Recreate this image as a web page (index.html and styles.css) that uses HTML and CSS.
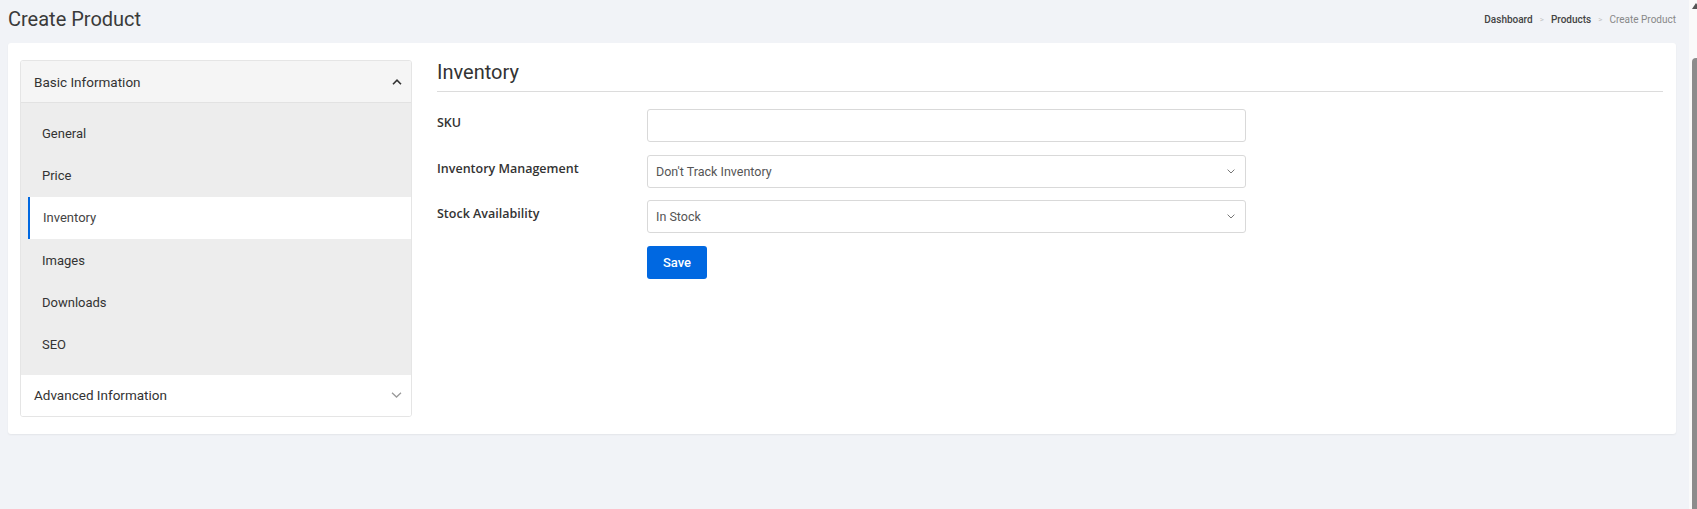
FILE: index.html
```html
<!DOCTYPE html>
<html lang="en">
<head>
<meta charset="utf-8">
<title>Create Product</title>
<link rel="stylesheet" href="styles.css">
</head>
<body>
<div class="page">
  <header class="page-header">
    <h1 class="page-title">Create Product</h1>
    <nav class="breadcrumb">
      <span class="crumb">Dashboard</span><span class="sep">&gt;</span><span class="crumb">Products</span><span class="sep">&gt;</span><span class="crumb current">Create Product</span>
    </nav>
  </header>

  <section class="card">
    <aside class="accordion">
      <div class="acc-header open">
        <span>Basic Information</span>
        <svg class="chev" width="10" height="6" viewBox="0 0 10 6"><path d="M1 5.2 L5 1.2 L9 5.2" fill="none" stroke="#333" stroke-width="1.6"/></svg>
      </div>
      <ul class="acc-list">
        <li class="acc-item">General</li>
        <li class="acc-item">Price</li>
        <li class="acc-item active">Inventory</li>
        <li class="acc-item">Images</li>
        <li class="acc-item">Downloads</li>
        <li class="acc-item">SEO</li>
      </ul>
      <div class="acc-header closed">
        <span>Advanced Information</span>
        <svg class="chev" width="11" height="6" viewBox="0 0 11 6"><path d="M1 0.8 L5.5 5 L10 0.8" fill="none" stroke="#9a9a9a" stroke-width="1.3"/></svg>
      </div>
    </aside>

    <div class="content">
      <h2 class="section-title">Inventory</h2>
      <div class="form">
        <div class="row">
          <label class="label">SKU</label>
          <div class="control"><input class="input" type="text"></div>
        </div>
        <div class="row">
          <label class="label">Inventory Management</label>
          <div class="control">
            <div class="select"><span>Don't Track Inventory</span>
              <svg width="8" height="5" viewBox="0 0 8 5"><path d="M0.6 0.6 L4 4 L7.4 0.6" fill="none" stroke="#777" stroke-width="1"/></svg>
            </div>
          </div>
        </div>
        <div class="row">
          <label class="label">Stock Availability</label>
          <div class="control">
            <div class="select"><span>In Stock</span>
              <svg width="8" height="5" viewBox="0 0 8 5"><path d="M0.6 0.6 L4 4 L7.4 0.6" fill="none" stroke="#777" stroke-width="1"/></svg>
            </div>
          </div>
        </div>
        <div class="row">
          <span class="label"></span>
          <div class="control"><button class="btn" type="button">Save</button></div>
        </div>
      </div>
    </div>
  </section>
</div>

<div class="scrollbar">
  <div class="sb-arrow"></div>
  <div class="sb-thumb"></div>
</div>
</body>
</html>
```

FILE: styles.css
```css
* { box-sizing: border-box; }

html, body {
  margin: 0;
  padding: 0;
  height: 100%;
  overflow: hidden;
}

body {
  background: #f1f3f7;
  font-family: Roboto, "Liberation Sans", sans-serif;
  color: #333;
}

.page {
  padding: 0 21px 0 8px;
}

.page-header {
  height: 37px;
  display: flex;
  align-items: center;
  justify-content: space-between;
}

.page-title {
  margin: 0;
  font-size: 20px;
  font-weight: 400;
  color: #3a3a3a;
  line-height: 1;
  padding-top: 1px;
}

.breadcrumb {
  font-size: 10px;
  display: flex;
  align-items: center;
  padding-top: 1px;
}

.crumb { color: #444; font-weight: 500; }
.crumb.current { color: #888; font-weight: 400; }
.sep {
  color: #c4c4c4;
  font-size: 8px;
  margin: 0 7px;
}

.card {
  margin-top: 6px;
  background: #fff;
  border-radius: 3px;
  box-shadow: 0 1px 2px rgba(0, 0, 0, 0.06);
  padding: 17px 13px 17px 12px;
  display: flex;
  align-items: flex-start;
  gap: 25px;
}

.accordion {
  width: 392px;
  flex: none;
  border: 1px solid #e5e5e5;
  border-radius: 3px;
  overflow: hidden;
}

.acc-header {
  height: 42px;
  display: flex;
  align-items: center;
  justify-content: space-between;
  padding: 0 9px 0 13px;
  font-size: 13.5px;
  color: #333;
}

.acc-header.open {
  background: #f5f5f5;
  border-bottom: 1px solid #e2e2e2;
}

.acc-header.closed {
  background: #fff;
  height: 41px;
}

.acc-list {
  list-style: none;
  margin: 0;
  padding: 9px 0 9px 7px;
  background: #ededed;
}

.acc-item {
  height: 42.3px;
  display: flex;
  align-items: center;
  padding-left: 14px;
  font-size: 13px;
  color: #333;
}

.acc-item.active {
  background: #fff;
  border-left: 2px solid #0068e1;
  padding-left: 13px;
  color: #444;
}

.content {
  flex: 1;
  min-width: 0;
}

.section-title {
  margin: 0;
  font-family: Roboto, "Liberation Sans", sans-serif;
  font-weight: 400;
  font-size: 20px;
  line-height: 1;
  color: #333;
  padding: 2px 0 9px;
  border-bottom: 1px solid #dcdcdc;
  margin-bottom: 17px;
}

.form { display: flex; flex-direction: column; }

.row {
  display: flex;
  align-items: flex-start;
  margin-bottom: 12.7px;
}

.label {
  width: 210px;
  flex: none;
  font-family: "Open Sans", sans-serif;
  font-weight: 600;
  font-size: 12.5px;
  line-height: 17px;
  padding-top: 5px;
  color: #333;
}

.control { width: 599px; }

.input,
.select {
  width: 100%;
  height: 33px;
  border: 1px solid #d9d9d9;
  border-radius: 3px;
  background: #fff;
  margin: 0;
  display: block;
}

.select {
  display: flex;
  align-items: center;
  justify-content: space-between;
  padding: 0 10px 0 8px;
  font-size: 12.5px;
  color: #555;
}

.btn {
  height: 33px;
  width: 60px;
  border: none;
  border-radius: 3px;
  background: #0068e1;
  color: #fff;
  font-family: Roboto, "Liberation Sans", sans-serif;
  font-weight: 500;
  font-size: 13px;
  padding: 0;
}

.scrollbar {
  position: fixed;
  top: 0;
  right: 0;
  width: 8px;
  height: 100%;
  background: #fafafa;
}

.sb-arrow {
  position: absolute;
  top: 3px;
  left: 3px;
  width: 0;
  height: 0;
  border-left: 4px solid transparent;
  border-right: 4px solid transparent;
  border-bottom: 6px solid #555;
}

.sb-thumb {
  position: absolute;
  top: 58px;
  left: 3px;
  right: -4px;
  bottom: 0;
  background: #8c8c8c;
  border-radius: 4px 4px 0 0;
}
```
